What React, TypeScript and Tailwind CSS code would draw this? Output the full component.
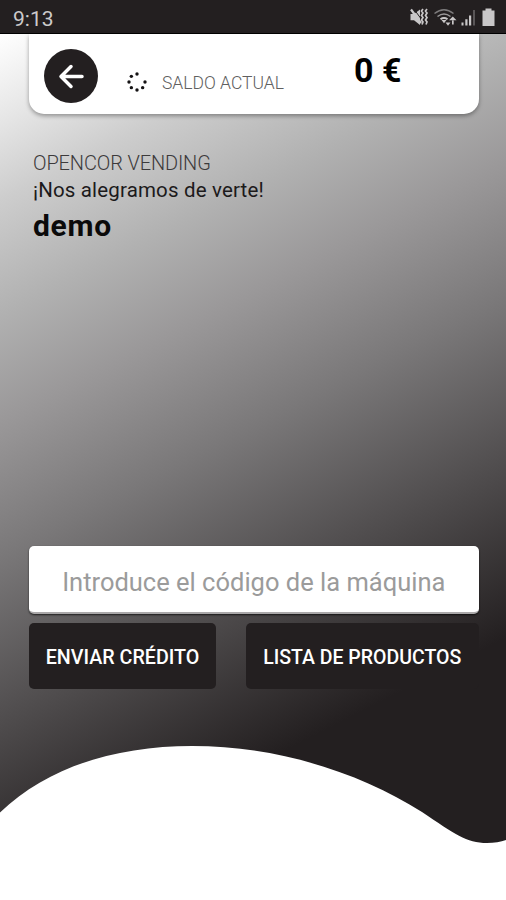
import React from "react";

const spinnerDots = [0, 1, 2, 3, 4, 5, 6, 7].filter((i) => i !== 1);

function StatusIcons() {
  return (
    <svg width="92" height="24" viewBox="408 6 92 24" fill="#c9c7c8" aria-hidden="true">
      <path d="M410.500 15h3.500l6-4.500v15.500l-6-4.700h-3.500z" />
      <path d="M411 10.500l10 13.500" stroke="#c9c7c8" strokeWidth="2.200" />
      <path d="M413.500 9.500l7 9.500" stroke="#231f20" strokeWidth="1" />
      <path d="M423 10l-1.500 2 1.500 2-1.500 2.500 1.500 2-1.500 2.500 1.500 2-1 2.500M427 10l-1.500 2 1.500 2-1.500 2.500 1.500 2-1.500 2.500 1.500 2-1 2.500" fill="none" stroke="#c9c7c8" strokeWidth="1.700" />
      <g fill="none" stroke="#7d7b7c" strokeWidth="1.500">
        <path d="M434.500 14.500q9.500-7.500 19 0" />
        <path d="M437.500 17.500q6.500-5 13 0" stroke="#9a9899" />
        <path d="M440.500 20.300q3.500-2.500 7 0" stroke="#c9c7c8" strokeWidth="2" />
      </g>
      <path d="M441.500 21h5l-2.500 3.300zM445.500 23.500h5l-2.500 3.200zM449 21.200h7.500l-3.700-3.700zM452 21h1.700v4.500H452z" />
      <path d="M461.500 23.500h2v3h-2zM465.300 20.300h2.200v6.200h-2.200zM469 16.500h2.200v10H469z" />
      <path d="M473.200 11h1.600v15.500h-1.600z" fill="#686566" />
      <path d="M485.500 9.500h6v2h3V27h-12V11.500h3z" />
    </svg>
  );
}

function Spinner() {
  return (
    <svg className="size-[22px]" viewBox="-11 -11 22 22" fill="#151314" aria-hidden="true">
      {spinnerDots.map((i) => {
        const a = (i * Math.PI) / 4 - Math.PI / 2;
        return <circle key={i} cx={8 * Math.cos(a)} cy={8 * Math.sin(a)} r="1.7" />;
      })}
    </svg>
  );
}

export default function App() {
  return (
    <div className="flex h-[900px] w-[506px] flex-col overflow-hidden bg-white font-['Roboto',sans-serif]">
      <header className="flex h-[34px] shrink-0 items-center justify-between border-b border-black bg-[#231f20] pr-[6px] pl-[13px]">
        <span className="pt-[5px] text-[21px] leading-none text-[#cccacb]">9:13</span>
        <StatusIcons />
      </header>

      <main className="flex flex-1 flex-col bg-[linear-gradient(153deg,#ffffff_0px,#e6e6e6_77px,#cdcdcd_148px,#b1b1b1_250px,#9a9899_345px,#7a7879_465px,#231f20_768px)]">
        <section className="mr-[27.500px] ml-[29px] flex h-[80px] shrink-0 rounded-b-[15px] bg-white shadow-[0_2px_4px_rgba(0,0,0,0.35)]">
          <button className="mt-[15px] ml-[15px] flex size-[54px] shrink-0 items-center justify-center rounded-full bg-[#231f20]" aria-label="Volver">
            <svg className="size-[28px]" viewBox="0 0 28 28" fill="none" stroke="white" strokeWidth="3.500" strokeLinecap="round" strokeLinejoin="round">
              <path d="M25 14.500H4M14 4.500L4 14.500l10 10" />
            </svg>
          </button>
          <div className="mt-[37px] ml-[28px] flex h-[22px] items-center">
            <Spinner />
            <span className="mt-[2px] ml-[14px] w-[125px] text-[17.500px] leading-[22px] font-light whitespace-nowrap text-[#606060]">SALDO ACTUAL</span>
          </div>
          <span className="mt-[16px] ml-[67px] text-[34px] leading-[40px] font-bold whitespace-nowrap text-black">0 €</span>
        </section>

        <section className="mt-[34px] ml-[33px] flex flex-col">
          <p className="h-[28px] text-[20px] leading-[30px] font-light tracking-[-0.140px] text-[#3c3a3b]">OPENCOR VENDING</p>
          <p className="h-[28px] text-[20.500px] leading-[28px] tracking-[0.160px] text-[#1c1a1b]">¡Nos alegramos de verte!</p>
          <h1 className="h-[44px] text-[30px] leading-[44px] font-bold tracking-[0.700px] text-[#0b0a0a]">demo</h1>
        </section>

        <form className="mr-[27.500px] ml-[29px] mt-[298px] flex shrink-0 flex-col gap-[9px]">
          <input
            className="h-[68px] w-full rounded-[5px] border-b-2 border-[#aaa8a9] bg-white pt-[6px] text-center text-[25.500px] text-[#9b9b9b] shadow-[0_1px_2px_rgba(0,0,0,0.7)] outline-none placeholder:text-[#9b9b9b]"
            placeholder="Introduce el código de la máquina"
          />
          <div className="flex gap-[30px]">
            <button type="button" className="h-[66px] w-[187px] rounded-[5px] bg-[#231f20] pt-[4px] text-[19.700px] font-medium whitespace-nowrap text-white">ENVIAR CRÉDITO</button>
            <button type="button" className="h-[66px] flex-1 rounded-[5px] bg-[#231f20] pt-[4px] text-[19.500px] font-medium whitespace-nowrap text-white">LISTA DE PRODUCTOS</button>
          </div>
        </form>

        <svg className="mt-auto h-[160px] w-full shrink-0" viewBox="0 740 506 160" fill="white" aria-hidden="true">
          <path d="M0 812.500C48 766 118 746 192 746C280 746 362 774 422 812C455 834 466 843 487 843Q498 843 506 840V900H0Z" />
        </svg>
      </main>
    </div>
  );
}
